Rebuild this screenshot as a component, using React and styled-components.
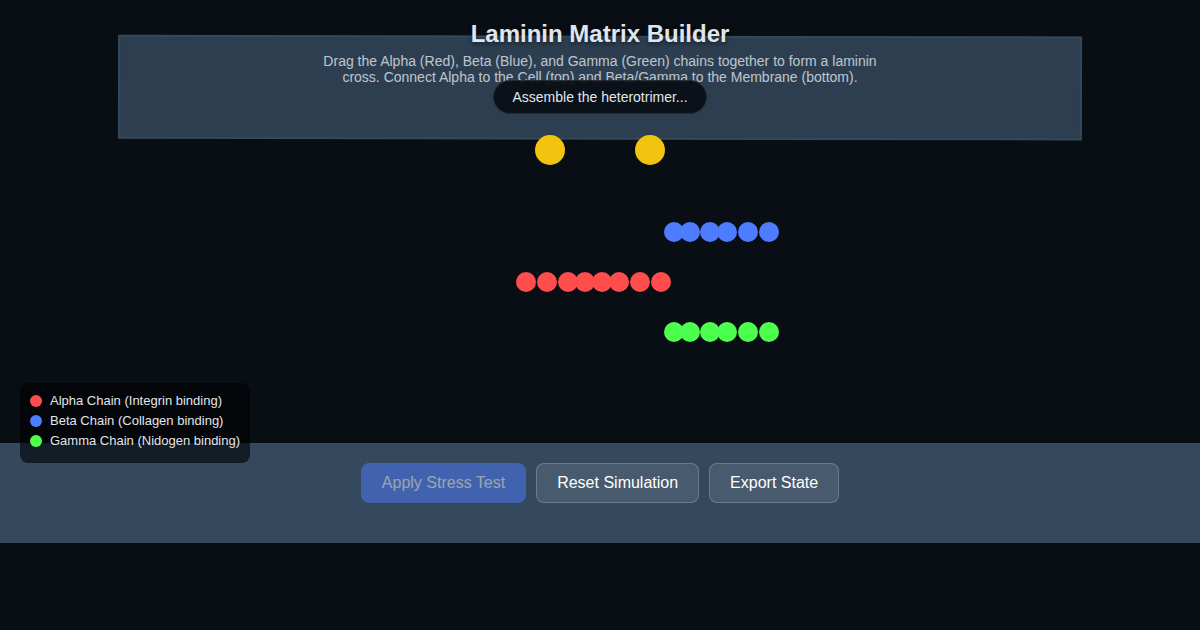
import React from 'react'
import styled, { createGlobalStyle } from 'styled-components'

const alphaBeads = [526, 547, 568, 585, 602, 619, 640, 661]
const shortBeads = [674, 690, 710, 727, 748, 769]

const chains = [
    { name: 'Alpha Chain (Integrin binding)', color: '#ff4d4d', y: 282, beads: alphaBeads },
    { name: 'Beta Chain (Collagen binding)', color: '#4d7cff', y: 232, beads: shortBeads },
    { name: 'Gamma Chain (Nidogen binding)', color: '#4dff4d', y: 332, beads: shortBeads },
]

const receptors = [550, 650]

export default function App() {
    return (
        <Page>
            <GlobalStyle />

            <Scene aria-hidden="true">
                {/* membrane goes edge to edge, everything else hangs off the centre line */}
                <rect x="0" y="443" width="100%" height="100" fill="#34495e" />
                <svg x="50%" overflow="visible">
                    <g transform="translate(-600 0)">
                        <rect x="119" y="36.6" width="962" height="102" fill="#2c3e50" stroke="#34495e" strokeWidth="2" transform="rotate(0.1 600 87.6)" />
                        {receptors.map(x => <circle key={x} cx={x} cy="150" r="15" fill="#f1c40f" />)}
                        {chains.map(c => c.beads.map(x => (
                            <circle key={c.name + x} cx={x} cy={c.y} r="10" fill={c.color} />
                        )))}
                    </g>
                </svg>
            </Scene>

            <Overlay>
                <Header>
                    <Title>Laminin Matrix Builder</Title>
                    <Hint>
                        Drag the Alpha (Red), Beta (Blue), and Gamma (Green) chains together to form a laminin
                        cross. Connect Alpha to the Cell (top) and Beta/Gamma to the Membrane (bottom).
                    </Hint>
                </Header>

                <Status role="status">Assemble the heterotrimer...</Status>

                <Legend>
                    {chains.map(c => (
                        <LegendItem key={c.name}>
                            <Dot $color={c.color} />
                            {c.name}
                        </LegendItem>
                    ))}
                </Legend>

                <Controls>
                    <Button $primary disabled>Apply Stress Test</Button>
                    <Button>Reset Simulation</Button>
                    <Button>Export State</Button>
                </Controls>
            </Overlay>
        </Page>
    )
}


const GlobalStyle = createGlobalStyle`
* {
    box-sizing: border-box;
}
body {
    margin: 0;
    background-color: #090e14;
    color: #e0e6ed;
    font-family: 'Liberation Sans', Arial, sans-serif;
}
`

const Page = styled.main`
position: relative;
min-height: 100vh;
`

const Scene = styled.svg`
position: absolute;
top: 0;
left: 0;
width: 100%;
height: 100%;
`

const Overlay = styled.div`
position: relative;
display: flex;
flex-direction: column;
align-items: center;
padding: 20px;
`

const Header = styled.header`
height: 60px;
text-align: center;
`

const Title = styled.h1`
margin: 0;
font-size: 24px;
line-height: 28px;
text-shadow: 0 2px 4px rgba(0, 0, 0, 0.5);
`

const Hint = styled.p`
max-width: 568px;
margin: 5px 0 0;
font-size: 14px;
line-height: 16px;
opacity: 0.8;
`

const Status = styled.div`
position: relative;
padding: 8px 18px;
border: 1px solid rgba(255, 255, 255, 0.1);
border-radius: 20px;
background-color: rgba(8, 12, 18, 0.9);
font-size: 14px;
line-height: 16px;
`

const Legend = styled.ul`
align-self: flex-start;
margin: 269px 0 0;
padding: 10px;
border-radius: 8px;
background-color: rgba(0, 0, 0, 0.6);
list-style: none;
font-size: 13px;
line-height: 15px;
`

const LegendItem = styled.li`
display: flex;
align-items: center;
gap: 8px;
margin-bottom: 5px;
`

const Dot = styled.span`
width: 12px;
height: 12px;
border-radius: 50%;
background-color: ${p => p.$color};
`

const Controls = styled.div`
display: flex;
flex-wrap: wrap;
justify-content: center;
gap: 10px;
`

const Button = styled.button`
padding: 10px 20px;
border: 1px solid ${p => p.$primary ? '#4d7cff' : 'rgba(255, 255, 255, 0.2)'};
border-radius: 8px;
background-color: ${p => p.$primary ? '#4d7cff' : 'rgba(255, 255, 255, 0.1)'};
color: white;
font-family: inherit;
font-size: 16px;
line-height: 18px;
cursor: pointer;

&:disabled {
    opacity: 0.5;
    cursor: not-allowed;
}
`
